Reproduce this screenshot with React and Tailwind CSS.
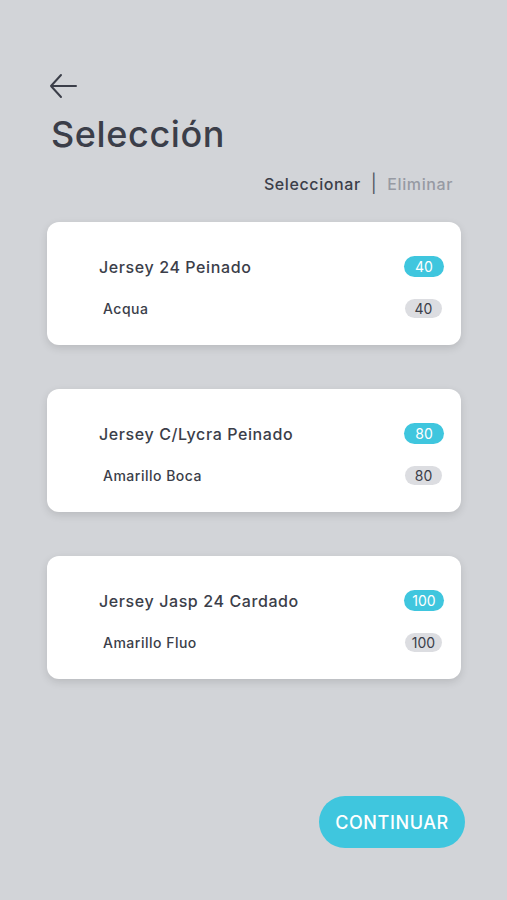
import React from 'react';

const items = [
    { name: 'Jersey 24 Peinado', color: 'Acqua', qty: 40 },
    { name: 'Jersey C/Lycra Peinado', color: 'Amarillo Boca', qty: 80 },
    { name: 'Jersey Jasp 24 Cardado', color: 'Amarillo Fluo', qty: 100 },
];

const ItemCard = ({ name, color, qty }) => (
    <div className="bg-white rounded-xl h-[123px] shadow-[0_3px_8px_rgba(0,0,0,0.12)] flex flex-col justify-center pt-[6px] pl-[52px] pr-[17px]">
        <div className="flex items-center justify-between">
            <span className="text-[16px] font-medium text-[#3b3e49] tracking-[0.6px]">{name}</span>
            <span className="h-[21px] min-w-[40px] px-2 rounded-full bg-[#3fc6de] text-white text-[14px] flex items-center justify-center">{qty}</span>
        </div>
        <div className="flex items-center justify-between mt-[19px] pl-[4px]">
            <span className="text-[14px] font-medium text-[#3b3e49] tracking-[0.5px]">{color}</span>
            <span className="h-[19px] min-w-[37px] px-[6px] mr-[2px] rounded-full bg-[#dcdde1] text-[#3b3e49] text-[14px] flex items-center justify-center">{qty}</span>
        </div>
    </div>
);

export default function App() {
    return (
        <div className="w-[507px] h-[900px] bg-[#d2d4d8] flex flex-col px-[47px] pt-[72px]" style={{ fontFamily: 'Inter, "Noto Sans", sans-serif' }}>
            <button className="w-[30px] h-[28px] ml-[1px] text-[#3b3e49]">
                <svg width="30" height="28" viewBox="0 0 30 28" fill="none" stroke="currentColor" strokeWidth="2" strokeLinecap="round" strokeLinejoin="round">
                    <path d="M28 14H3M13 3L3 14l10 11" />
                </svg>
            </button>
            <h1 className="text-[36px] font-medium text-[#3b3e49] leading-none mt-[16px] ml-[4px] tracking-[0.6px]">Selección</h1>
            <div className="flex items-center justify-end gap-[10px] mt-[18px] mr-[7px] text-[16px] font-medium tracking-[0.6px]">
                <span className="text-[#3b3e49]">Seleccionar</span>
                <span className="text-[#555866] text-[18px] font-normal">|</span>
                <span className="text-[#979aa3]">Eliminar</span>
            </div>
            <div className="flex flex-col gap-[44px] mt-[25px] mr-[-1px]">
                {items.map((it) => <ItemCard key={it.name} {...it} />)}
            </div>
            <div className="flex justify-end mt-auto mb-[52px] mr-[-5px]">
                <button className="w-[146px] h-[52px] rounded-full bg-[#3fc6de] text-white text-[18px] font-medium tracking-[0.6px]">CONTINUAR</button>
            </div>
        </div>
    );
}
